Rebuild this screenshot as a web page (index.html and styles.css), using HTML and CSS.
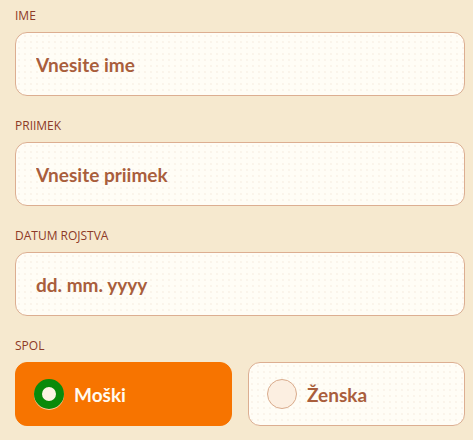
FILE: index.html
```html
<!DOCTYPE html>
<html lang="sl">
<head>
<meta charset="utf-8">
<title>Obrazec</title>
<link rel="stylesheet" href="styles.css">
</head>
<body>
<form class="form">
  <div class="field">
    <label class="label" for="ime">IME</label>
    <input class="input" id="ime" type="text" placeholder="Vnesite ime">
  </div>
  <div class="field">
    <label class="label" for="priimek">PRIIMEK</label>
    <input class="input" id="priimek" type="text" placeholder="Vnesite priimek">
  </div>
  <div class="field">
    <label class="label" for="datum">DATUM ROJSTVA</label>
    <input class="input" id="datum" type="text" placeholder="dd. mm. yyyy">
  </div>
  <div class="field">
    <span class="label">SPOL</span>
    <div class="options">
      <label class="option option-selected">
        <span class="radio radio-on"></span>
        <span class="option-text">Moški</span>
      </label>
      <label class="option">
        <span class="radio"></span>
        <span class="option-text">Ženska</span>
      </label>
    </div>
  </div>
</form>
</body>
</html>
```
FILE: styles.css
```css
* { box-sizing: border-box; }

html, body {
  margin: 0;
  padding: 0;
  background: #f6e9cf;
}

body {
  font-family: Lato, "Open Sans", sans-serif;
}

.form {
  width: 450px;
  margin: 0 0 0 15px;
  padding-top: 8px;
  display: flex;
  flex-direction: column;
  gap: 22px;
}

.field {
  display: flex;
  flex-direction: column;
  gap: 8px;
}

.label {
  display: block;
  font-family: "Open Sans", sans-serif;
  font-size: 12px;
  line-height: 16px;
  font-weight: 500;
  color: #8d3a27;
  letter-spacing: 0;
}

.input {
  display: block;
  width: 100%;
  height: 64px;
  margin: 0;
  padding: 0 20px;
  border: 1px solid #dcae91;
  border-radius: 12px;
  background-color: #fffdf6;
  background-image: radial-gradient(rgba(214, 180, 150, 0.12) 0.7px, transparent 1px);
  background-size: 6px 6px;
  font-family: Lato, sans-serif;
  font-size: 19px;
  font-weight: 700;
  color: #a95e3c;
  outline: none;
}

.input::placeholder {
  color: #a95e3c;
  opacity: 1;
}

.options {
  display: grid;
  grid-template-columns: 1fr 1fr;
  gap: 16px;
}

.option {
  display: flex;
  align-items: center;
  gap: 10px;
  height: 64px;
  padding: 0 18px;
  border: 1px solid #dcae91;
  border-radius: 12px;
  background-color: #fffdf6;
  background-image: radial-gradient(rgba(214, 180, 150, 0.12) 0.7px, transparent 1px);
  background-size: 6px 6px;
  color: #a95e3c;
}

.option-selected {
  background: #f77400;
  border-color: #f77400;
  color: #fffaf0;
}

.radio {
  flex: none;
  width: 30px;
  height: 30px;
  border-radius: 50%;
  background: #fcefe1;
  border: 1px solid #d9ab8c;
}

.radio-on {
  background: #fdf3e4;
  border: 8px solid #0a8a0a;
  box-shadow: 0 1px 0 rgba(255, 240, 220, 0.7);
}

.option-text {
  font-size: 19px;
  font-weight: 700;
  line-height: 1;
}
```
